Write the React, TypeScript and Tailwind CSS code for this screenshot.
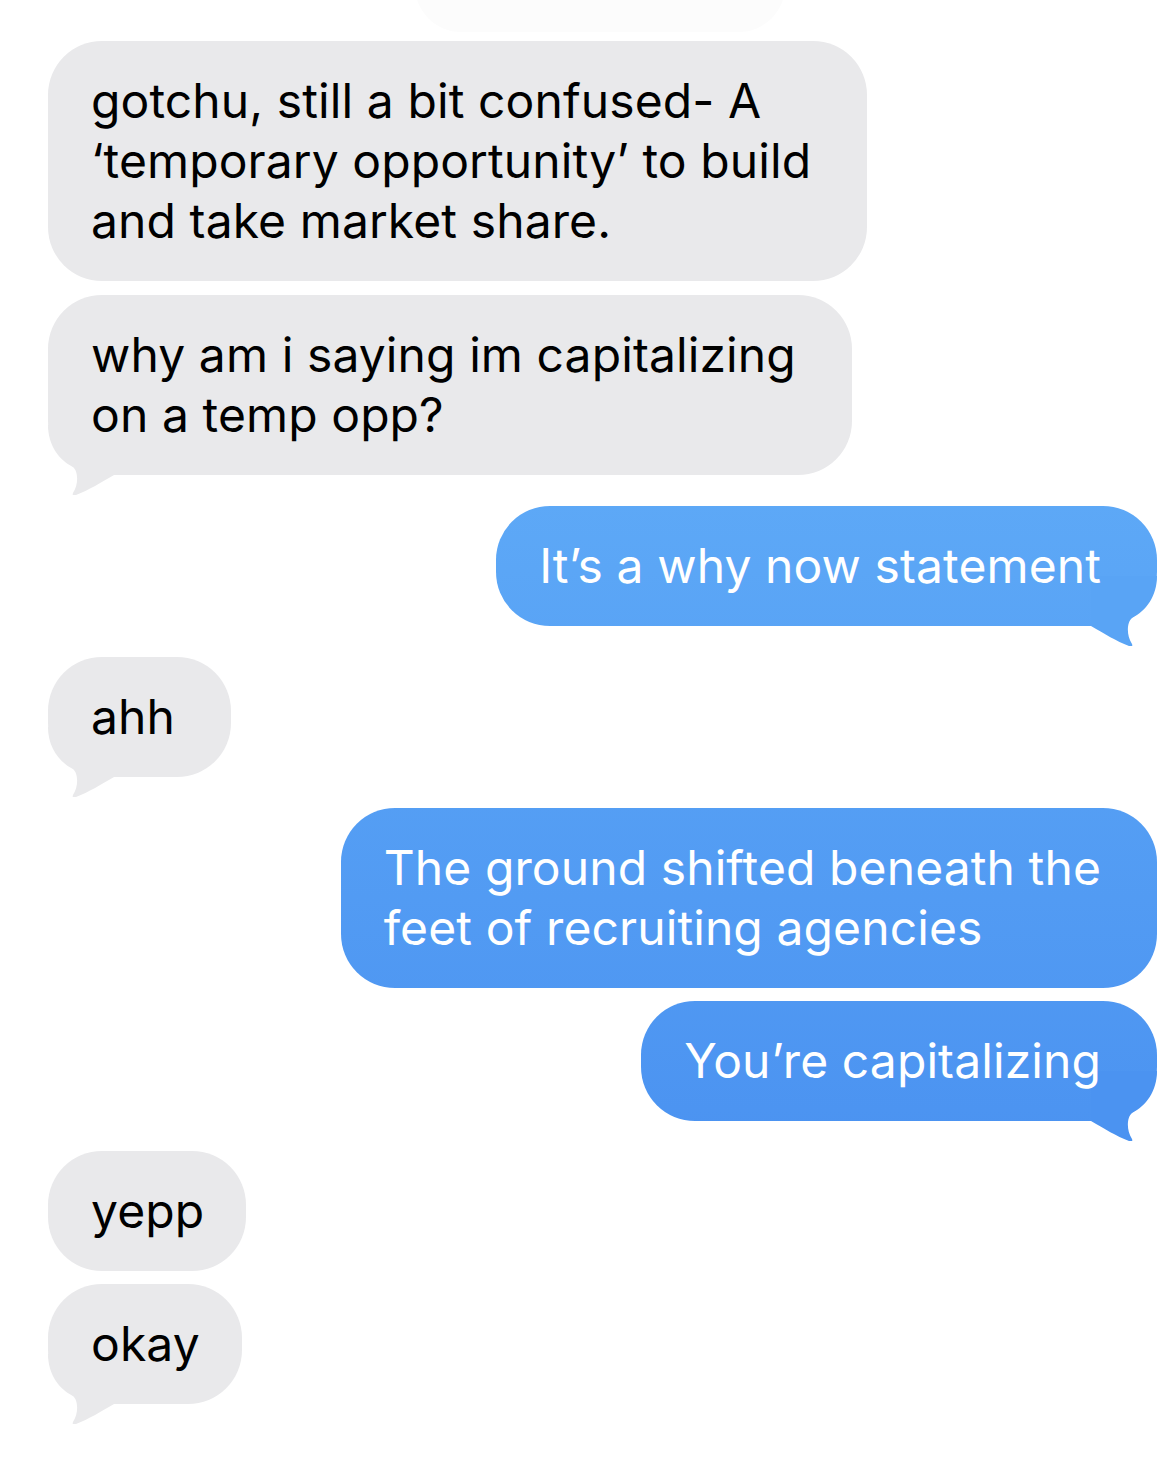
import type { ReactNode } from "react";

// iOS-style thread: grey incoming, blue outgoing with a screen-fixed gradient
const BLUE_BG =
  "bg-[linear-gradient(180deg,#6bb9fb_0%,#4288ee_100%)] bg-fixed text-white";
const GREY_BG = "bg-[#e9e9eb] text-black";

function Tail({ side, color }: { side: "left" | "right"; color: string }) {
  return (
    <svg
      aria-hidden
      width="66"
      height="70"
      viewBox="0 -50 66 70"
      className={`absolute bottom-[-20px] ${
        side === "left" ? "left-0" : "right-0 -scale-x-100"
      }`}
    >
      <path
        d="M0 -50 C0 -30 11 -15 25 -8 C30 -4 31 9 25 18 C24 20.5 25.5 21 28 20 C41 15 52 8 66 0 L66 -50 Z"
        fill={color}
      />
    </svg>
  );
}

function Bubble({
  me,
  tail,
  tailColor,
  tight,
  children,
}: {
  me?: boolean;
  tail?: boolean;
  tailColor?: string;
  tight?: boolean;
  children: ReactNode;
}) {
  return (
    <div className={`flex ${me ? "justify-end" : "justify-start"}`}>
      <div
        className={`relative rounded-[54px] py-[30px] pl-[43px] text-[48px] leading-[60px] tracking-[0.1px] whitespace-nowrap ${
          tight ? "pr-[42px]" : "pr-[56px]"
        } ${me ? BLUE_BG : GREY_BG}`}
      >
        {tail && (
          <Tail
            side={me ? "right" : "left"}
            color={tailColor ?? (me ? "#59a4f5" : "#e9e9eb")}
          />
        )}
        <p className="relative">{children}</p>
      </div>
    </div>
  );
}

export default function App() {
  return (
    <div className="relative min-h-[1468px] w-[1170px] overflow-hidden bg-white font-['Inter','Noto_Sans',sans-serif]">
      {/* faded edge of an earlier bubble peeking at the top */}
      <div
        aria-hidden
        className="absolute left-[415px] top-[-60px] h-[92px] w-[370px] rounded-[46px] bg-[#fcfcfc]"
      />

      <div className="relative flex flex-col pl-[48px] pr-[13px] pt-[41px]">
        <Bubble>
          gotchu, still a bit confused- A
          <br />
          ‘temporary opportunity’ to build
          <br />
          and take market share.
        </Bubble>
        <div className="mt-[14px]">
          <Bubble tail>
            why am i saying im capitalizing
            <br />
            on a temp opp?
          </Bubble>
        </div>
        <div className="mt-[31px]">
          <Bubble me tail tailColor="#59a4f5">
            It’s a why now statement
          </Bubble>
        </div>
        <div className="mt-[31px]">
          <Bubble tail>ahh</Bubble>
        </div>
        <div className="mt-[31px]">
          <Bubble me>
            The ground shifted beneath the
            <br />
            feet of recruiting agencies
          </Bubble>
        </div>
        <div className="mt-[13px]">
          <Bubble me tail tailColor="#4b93f1">
            You’re capitalizing
          </Bubble>
        </div>
        <div className="mt-[30px]">
          <Bubble tight>yepp</Bubble>
        </div>
        <div className="mt-[13px]">
          <Bubble tail tight>
            okay
          </Bubble>
        </div>
      </div>
    </div>
  );
}
